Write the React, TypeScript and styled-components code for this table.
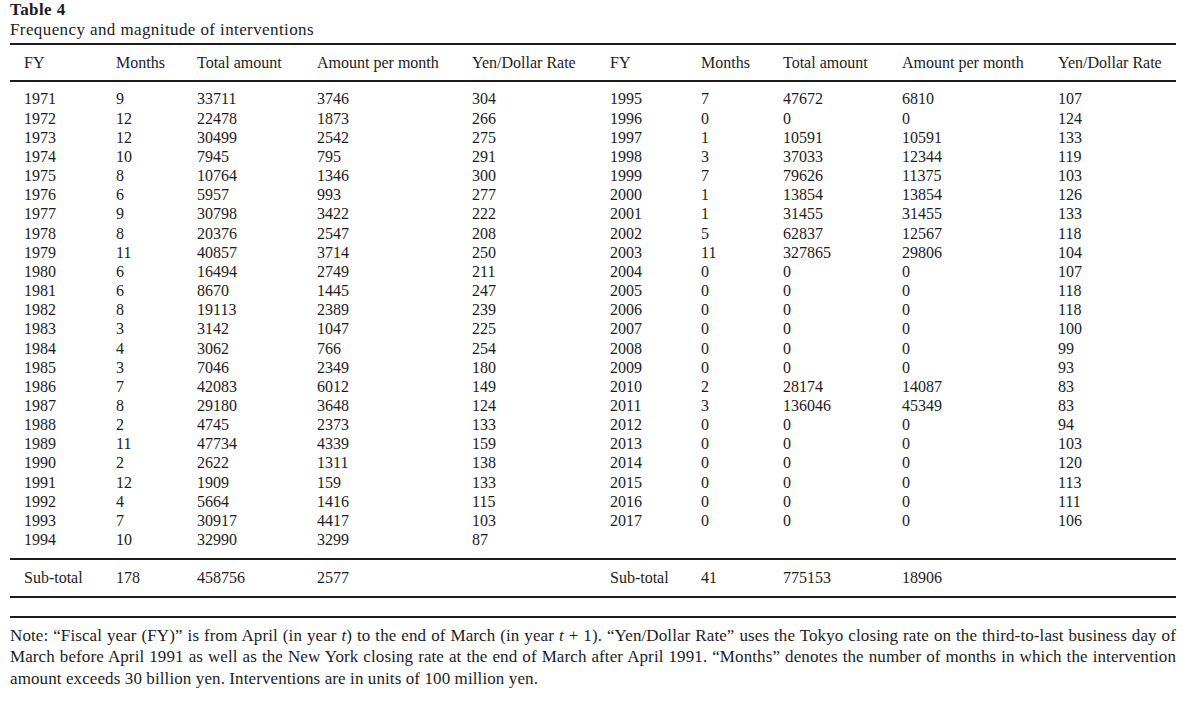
import React from 'react';
import styled, { createGlobalStyle } from 'styled-components';

type Row = [string, string, string, string, string];

const LEFT_ROWS: Row[] = [
  ['1971', '9', '33711', '3746', '304'],
  ['1972', '12', '22478', '1873', '266'],
  ['1973', '12', '30499', '2542', '275'],
  ['1974', '10', '7945', '795', '291'],
  ['1975', '8', '10764', '1346', '300'],
  ['1976', '6', '5957', '993', '277'],
  ['1977', '9', '30798', '3422', '222'],
  ['1978', '8', '20376', '2547', '208'],
  ['1979', '11', '40857', '3714', '250'],
  ['1980', '6', '16494', '2749', '211'],
  ['1981', '6', '8670', '1445', '247'],
  ['1982', '8', '19113', '2389', '239'],
  ['1983', '3', '3142', '1047', '225'],
  ['1984', '4', '3062', '766', '254'],
  ['1985', '3', '7046', '2349', '180'],
  ['1986', '7', '42083', '6012', '149'],
  ['1987', '8', '29180', '3648', '124'],
  ['1988', '2', '4745', '2373', '133'],
  ['1989', '11', '47734', '4339', '159'],
  ['1990', '2', '2622', '1311', '138'],
  ['1991', '12', '1909', '159', '133'],
  ['1992', '4', '5664', '1416', '115'],
  ['1993', '7', '30917', '4417', '103'],
  ['1994', '10', '32990', '3299', '87'],
];

const RIGHT_ROWS: Row[] = [
  ['1995', '7', '47672', '6810', '107'],
  ['1996', '0', '0', '0', '124'],
  ['1997', '1', '10591', '10591', '133'],
  ['1998', '3', '37033', '12344', '119'],
  ['1999', '7', '79626', '11375', '103'],
  ['2000', '1', '13854', '13854', '126'],
  ['2001', '1', '31455', '31455', '133'],
  ['2002', '5', '62837', '12567', '118'],
  ['2003', '11', '327865', '29806', '104'],
  ['2004', '0', '0', '0', '107'],
  ['2005', '0', '0', '0', '118'],
  ['2006', '0', '0', '0', '118'],
  ['2007', '0', '0', '0', '100'],
  ['2008', '0', '0', '0', '99'],
  ['2009', '0', '0', '0', '93'],
  ['2010', '2', '28174', '14087', '83'],
  ['2011', '3', '136046', '45349', '83'],
  ['2012', '0', '0', '0', '94'],
  ['2013', '0', '0', '0', '103'],
  ['2014', '0', '0', '0', '120'],
  ['2015', '0', '0', '0', '113'],
  ['2016', '0', '0', '0', '111'],
  ['2017', '0', '0', '0', '106'],
];

const HEADERS = ['FY', 'Months', 'Total amount', 'Amount per month', 'Yen/Dollar Rate'];
const COL_WIDTHS = [92, 81, 120, 155, 138, 91, 82, 119, 156, 132];
const EMPTY: Row = ['', '', '', '', ''];
const TOTALS = ['Sub-total', '178', '458756', '2577', '', 'Sub-total', '41', '775153', '18906', ''];

const App: React.FC = () => {
  const rows = LEFT_ROWS.map((left, i) => [...left, ...(RIGHT_ROWS[i] ?? EMPTY)]);

  return (
    <>
      <GlobalStyle />
      <StyledPage>
        <StyledLabel>Table 4</StyledLabel>
        <StyledCaption>Frequency and magnitude of interventions</StyledCaption>
        <StyledTable>
          <colgroup>
            {COL_WIDTHS.map((w, i) => (
              <col key={i} style={{ width: w }} />
            ))}
          </colgroup>
          <thead>
            <tr>
              {[...HEADERS, ...HEADERS].map((h, i) => (
                <StyledHeadCell key={i}>{h}</StyledHeadCell>
              ))}
            </tr>
          </thead>
          <tbody>
            <StyledSpacer $height={7.4}>
              <td colSpan={10} />
            </StyledSpacer>
            {rows.map((r) => (
              <tr key={r[0]}>
                {r.map((c, i) => (
                  <StyledCell key={i}>{c}</StyledCell>
                ))}
              </tr>
            ))}
            <StyledSpacer $height={8.6}>
              <td colSpan={10} />
            </StyledSpacer>
          </tbody>
          <tfoot>
            <tr>
              {TOTALS.map((c, i) => (
                <StyledTotalCell key={i}>{c}</StyledTotalCell>
              ))}
            </tr>
          </tfoot>
        </StyledTable>
        <StyledNote>
          Note: “Fiscal year (FY)” is from April (in year <i>t</i>) to the end of March (in year{' '}
          <i>t</i> + 1). “Yen/Dollar Rate” uses the Tokyo closing rate on the third-to-last business
          day of March before April 1991 as well as the New York closing rate at the end of March
          after April 1991. “Months” denotes the number of months in which the intervention amount
          exceeds 30 billion yen. Interventions are in units of 100 million yen.
        </StyledNote>
      </StyledPage>
    </>
  );
};

const GlobalStyle = createGlobalStyle`
  html, body {
    margin: 0;
    padding: 0;
    background: #ffffff;
  }
  body {
    font-family: "Liberation Serif", "Times New Roman", serif;
    color: #1c1c1c;
  }
`;

const StyledPage = styled.div`
  width: 1166px;
  padding: 0 10px;
  font-size: 16px;
`;

const StyledLabel = styled.div`
  font-size: 17px;
  font-weight: 700;
  letter-spacing: 0.4px;
  line-height: 19px;
`;

const StyledCaption = styled.div`
  font-size: 17px;
  letter-spacing: 0.4px;
  line-height: 21px;
  margin-bottom: 3px;
`;

const StyledTable = styled.table`
  width: 1166px;
  table-layout: fixed;
  border-collapse: collapse;
  border-top: 2px solid #1c1c1c;
  border-bottom: 2px solid #1c1c1c;
`;

const StyledHeadCell = styled.th`
  height: 35px;
  padding: 0 0 0 14px;
  text-align: left;
  font-weight: 400;
  white-space: nowrap;
  border-bottom: 2px solid #1c1c1c;
`;

const StyledSpacer = styled.tr<{ $height: number }>`
  td {
    height: ${(p) => p.$height}px;
    padding: 0;
  }
`;

const StyledCell = styled.td`
  height: 19.17px;
  padding: 0 0 0 14px;
  line-height: 19px;
  white-space: nowrap;
`;

const StyledTotalCell = styled.td`
  height: 36px;
  padding: 0 0 0 14px;
  white-space: nowrap;
  border-top: 2px solid #1c1c1c;
`;

const StyledNote = styled.p`
  margin: 18px 0 0;
  padding-top: 7px;
  border-top: 2px solid #1c1c1c;
  font-size: 17px;
  letter-spacing: 0.1px;
  line-height: 21.5px;
  text-align: justify;
`;

export default App;
